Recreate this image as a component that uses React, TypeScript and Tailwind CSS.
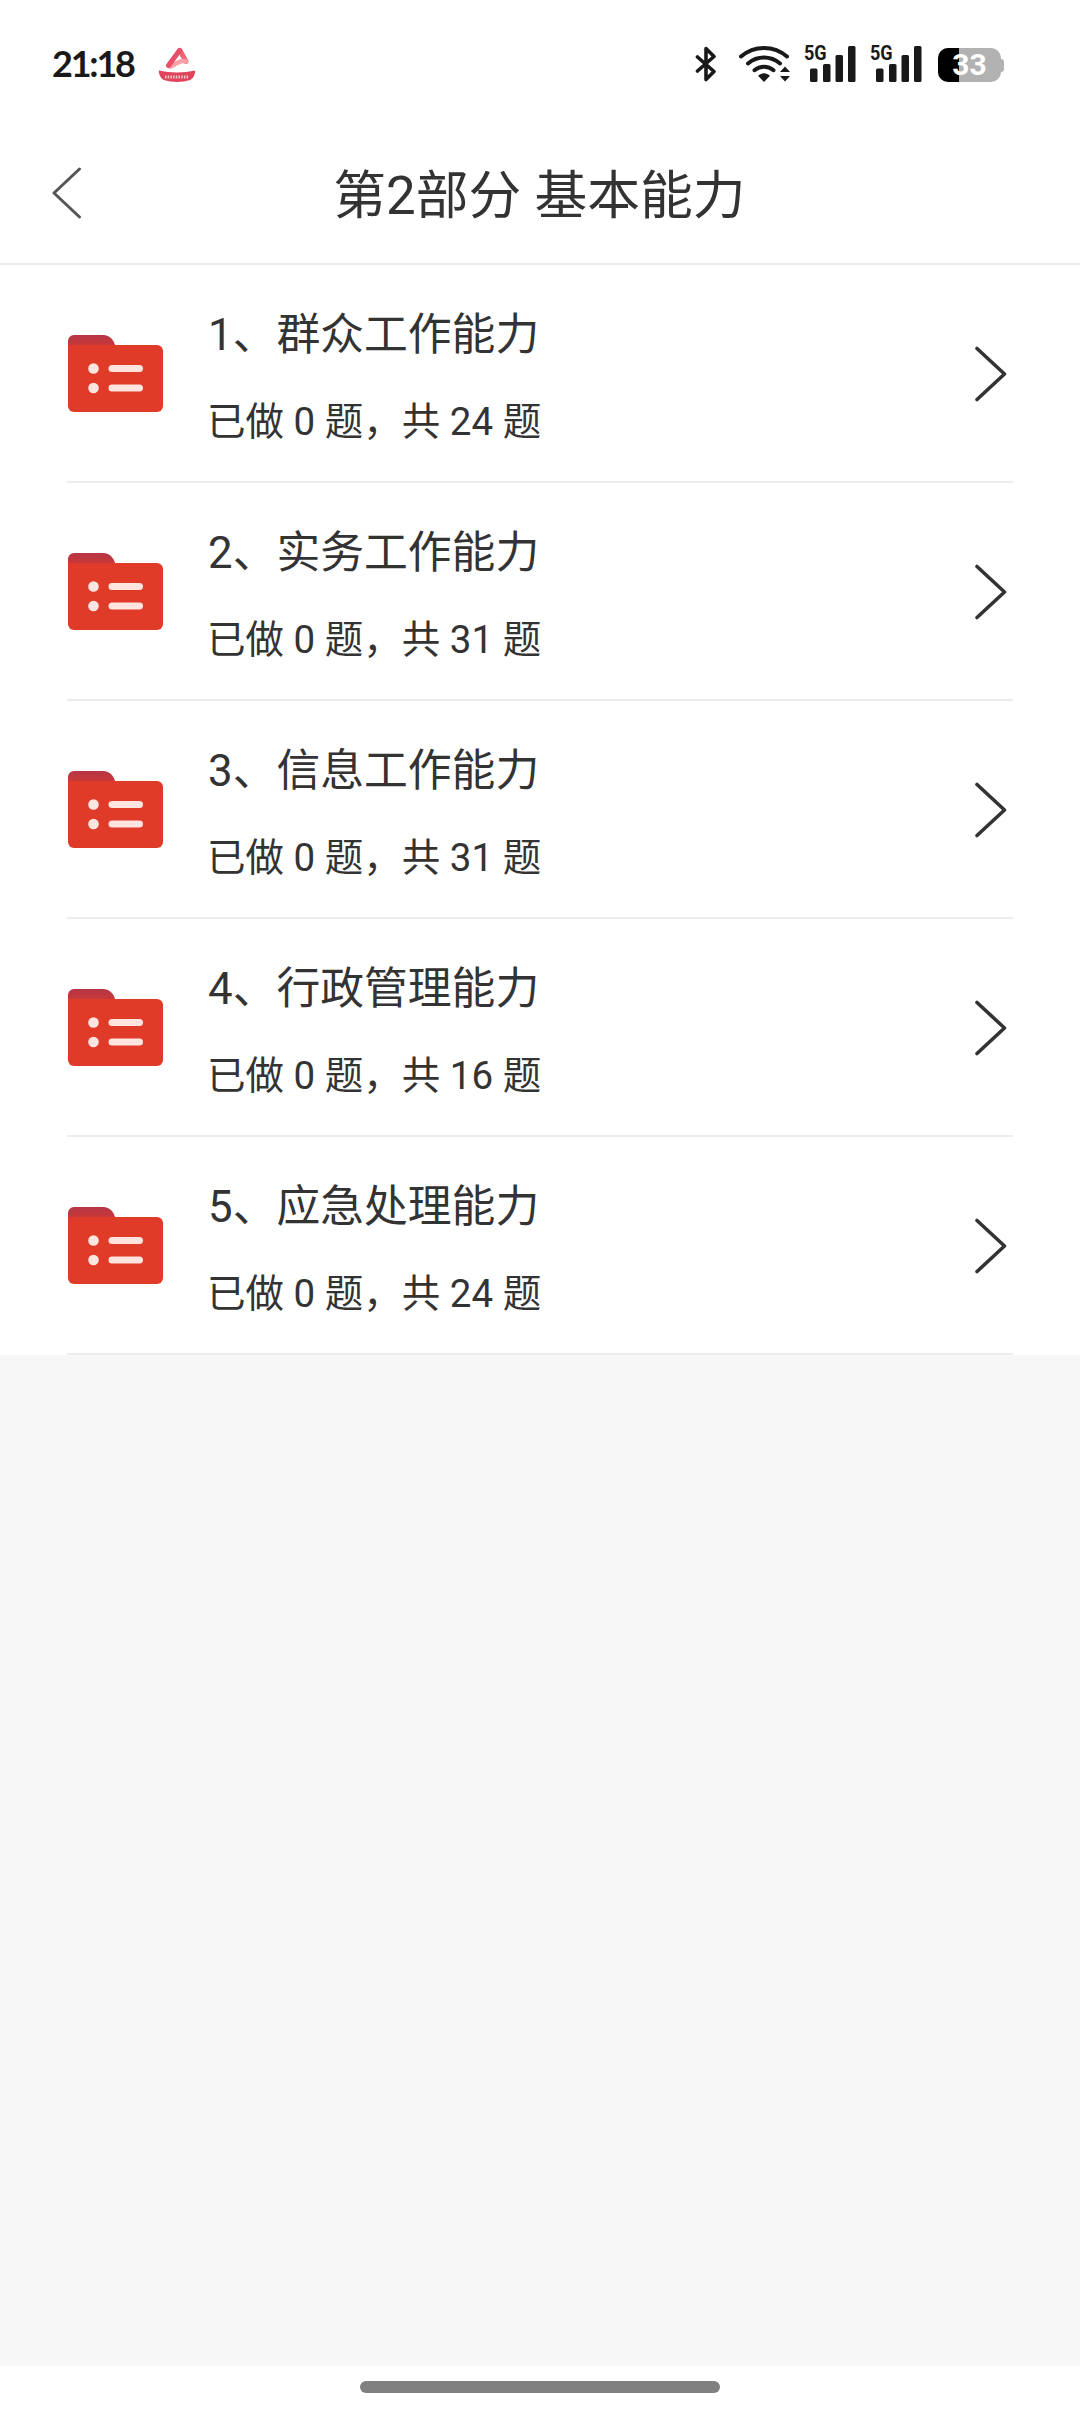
interface Chapter {
  id: number
  title: string
  done: number
  total: number
}

const chapters: Chapter[] = [
  { id: 1, title: '群众工作能力', done: 0, total: 24 },
  { id: 2, title: '实务工作能力', done: 0, total: 31 },
  { id: 3, title: '信息工作能力', done: 0, total: 31 },
  { id: 4, title: '行政管理能力', done: 0, total: 16 },
  { id: 5, title: '应急处理能力', done: 0, total: 24 },
]

function AppLogo() {
  return (
    <svg className="w-[38px] h-[38px]" viewBox="0 0 38 38" fill="none" strokeLinecap="round" strokeLinejoin="round">
      <path d="M22 5.500 28 16.500" stroke="#ee6578" strokeWidth="5" />
      <path d="M12.500 21.500 19 18c3.500-2 6-2.500 9-1.500" stroke="#f9a0a6" strokeWidth="4.500" />
      <path d="M10.500 20.500 21.500 5.500" stroke="#e8506a" strokeWidth="5" />
      <path d="M.8 25.500c11.500 2.500 24.900 2.500 36.400 0 0 4.500-2.200 8-5 9.500-8 2.500-18.400 2.500-26.400 0-2.800-1.500-5-5-5-9.500z" fill="#e0435c" />
      <path d="M7 32h24" stroke="#f7c3ca" strokeWidth="3" strokeLinecap="butt" strokeDasharray="1.500 1.200" />
    </svg>
  )
}

function BluetoothIcon() {
  return (
    <svg className="w-[22px] h-[38px]" viewBox="0 0 22 38" fill="none" stroke="#191919" strokeWidth="3.600" strokeLinejoin="round" strokeLinecap="round">
      <path d="M2.500 12 19 26.500 11 34.500V3.500L19 11.500 2.500 26" />
    </svg>
  )
}

function WifiIcon() {
  return (
    <svg className="w-[52px] h-[38px]" viewBox="0 0 52 38">
      <g fill="none" stroke="#191919" strokeWidth="4" strokeLinecap="round">
        <path d="M2 11.500c13-11.500 33-11.500 46 0" />
        <path d="M9 18.500c9.300-8 22.700-8 32 0" />
        <path d="M15.500 25.200c5.500-4.700 13.500-4.700 19 0" />
      </g>
      <path d="M19 30.800c3.700-3.400 8.300-3.400 12 0l-6 6.200z" fill="#191919" />
      <path d="M46 21.500l5 5.500h-10zM46 36.500l5-5.500h-10z" fill="#191919" />
    </svg>
  )
}

function SignalIcon() {
  return (
    <div className="relative">
      <svg className="w-[52px] h-[38px]" viewBox="0 0 52 38" fill="#191919">
        <rect x="6" y="23.500" width="7.500" height="13.500" rx="1.500" />
        <rect x="19" y="19" width="7.500" height="18" rx="1.500" />
        <rect x="31.500" y="10" width="7.500" height="27" rx="1.500" />
        <rect x="44" y="1" width="7.500" height="36" rx="1.500" />
      </svg>
      <span className="absolute -top-[4px] left-0 origin-left scale-x-[0.86] text-[21px] leading-[25px] font-bold text-[#191919]">5G</span>
    </div>
  )
}

function Battery({ level }: { level: number }) {
  return (
    <div className="flex items-center">
      <div className="relative flex h-[34px] w-[63px] items-center justify-center overflow-hidden rounded-[10px] bg-[#b2b2b2]">
        <div className="absolute inset-y-0 left-0 bg-black" style={{ width: level + '%' }} />
        <span className="relative text-[30px] leading-[34px] font-bold text-white">{level}</span>
      </div>
      <div className="h-[13px] w-[3px] rounded-r-[3px] bg-[#b2b2b2]" />
    </div>
  )
}

function StatusBar() {
  return (
    <div className="flex h-[128px] items-start pt-[45px] pl-[52px]">
      <span className="-mt-[1px] w-[84px] font-['Lato','Inter',sans-serif] text-[36px] leading-[38px] font-bold tracking-[-2.200px] text-[#191919]">21:18</span>
      <div className="ml-[22px]"><AppLogo /></div>
      <div className="ml-[499px]"><BluetoothIcon /></div>
      <div className="ml-[22px]"><WifiIcon /></div>
      <div className="ml-[13px]"><SignalIcon /></div>
      <div className="ml-[14px]"><SignalIcon /></div>
      <div className="ml-[16px] pt-[3px]"><Battery level={33} /></div>
    </div>
  )
}

function FolderIcon() {
  return (
    <svg className="w-[95px] h-[77px]" viewBox="0 0 95 77">
      <defs>
        <linearGradient id="tab" x1="0" y1="0" x2="0" y2="1">
          <stop offset="0" stopColor="#b63645" />
          <stop offset="1" stopColor="#d63a2f" />
        </linearGradient>
      </defs>
      <path d="M0 18V6a6 6 0 0 1 6-6h29c6 0 11 4 12.500 12v6z" fill="url(#tab)" />
      <path d="M0 10h89a6 6 0 0 1 6 6v55a6 6 0 0 1-6 6H6a6 6 0 0 1-6-6z" fill="#df3b28" />
      <g fill="#ffe4e0">
        <circle cx="25.500" cy="33.500" r="5.300" />
        <circle cx="25.500" cy="53" r="5.300" />
        <rect x="40.500" y="30" width="34.500" height="7" rx="3.500" />
        <rect x="40.500" y="49.500" width="34.500" height="7" rx="3.500" />
      </g>
    </svg>
  )
}

function ChapterRow({ chapter }: { chapter: Chapter }) {
  return (
    <li className="flex h-[218px] items-center border-b-2 border-[#ececec]">
      <div className="pl-[1px]"><FolderIcon /></div>
      <div className="ml-[45px] flex-1 pt-[6px]">
        <div className="text-[43.800px] leading-[60px]">{chapter.id}、{chapter.title}</div>
        <div className="mt-[31px] -ml-[1px] text-[38.500px] leading-[52px]">
          已做 {chapter.done} 题，共 {chapter.total} 题
        </div>
      </div>
      <svg className="mt-[2px] mr-[6px] w-[34px] h-[56px]" viewBox="0 0 34 56" fill="none" stroke="#333" strokeWidth="3.600" strokeLinecap="round" strokeLinejoin="round">
        <path d="M4 2.500 31.500 28 4 53.500" />
      </svg>
    </li>
  )
}

export default function App() {
  return (
    <div className="flex h-[2414px] w-[1080px] flex-col bg-[#f7f7f7] font-['Roboto','Noto_Sans_CJK_SC',sans-serif] text-[#333]">
      <div className="bg-white">
        <StatusBar />
        <header className="grid h-[137px] grid-cols-[120px_1fr_120px] items-center border-b-2 border-[#ececec]">
          <svg className="mb-[6px] ml-[52px] w-[30px] h-[52px]" viewBox="0 0 30 52" fill="none" stroke="#555" strokeWidth="3" strokeLinecap="round" strokeLinejoin="round">
            <path d="M27.500 2 2 26 27.500 50" />
          </svg>
          <h1 className="pt-[1px] pr-[1px] text-center text-[52.800px] leading-[72px]">第2部分 基本能力</h1>
        </header>
        <ul className="px-[67px]">
          {chapters.map(chapter => (
            <ChapterRow key={chapter.id} chapter={chapter} />
          ))}
        </ul>
      </div>
      <div className="mt-auto flex h-[48px] justify-center bg-white pt-[15px]">
        <div className="h-[12px] w-[360px] rounded-full bg-[#808080]" />
      </div>
    </div>
  )
}
